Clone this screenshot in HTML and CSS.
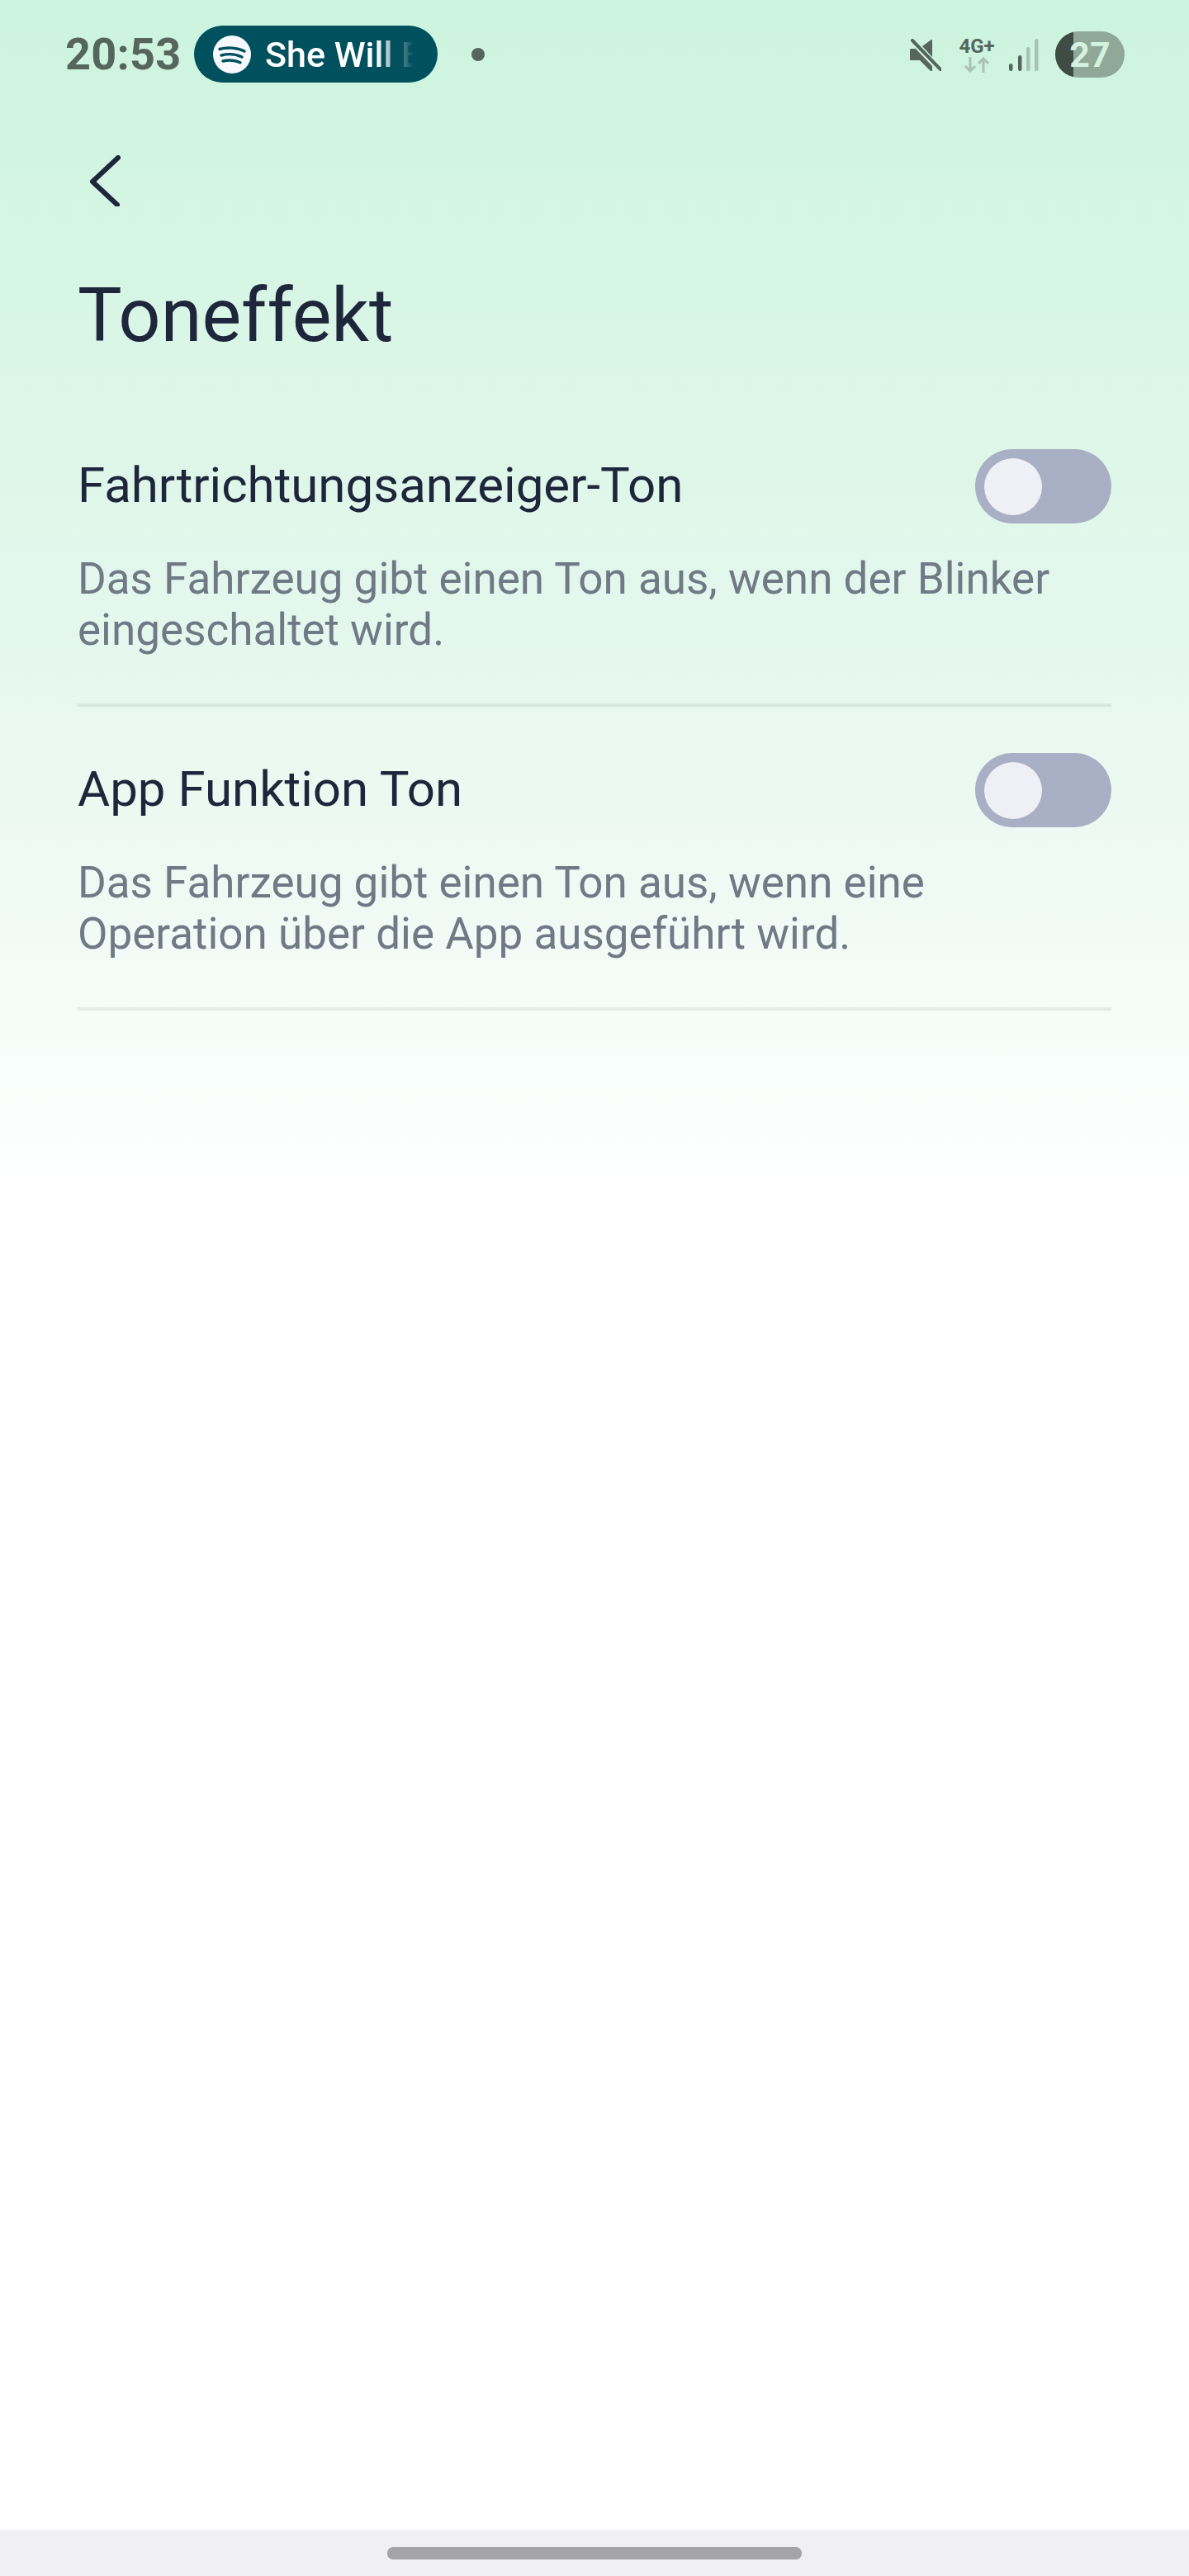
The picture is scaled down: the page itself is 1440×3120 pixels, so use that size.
FILE: index.html
```html
<!DOCTYPE html>
<html lang="de">
<head>
    <meta charset="UTF-8">
    <meta name="viewport" content="width=device-width, initial-scale=1.0">
    <title>Toneffekt</title>
    <link rel="stylesheet" href="styles.css">
</head>
<body>
    <div class="screen">
        <div class="status-bar">
            <span class="clock">20:53</span>
            <div class="media-chip">
                <svg class="spotify" viewBox="0 0 46 46">
                    <circle cx="23" cy="23" r="23" fill="#f8f9ff"/>
                    <path d="M8 16.500c9-2.500 21-2 30 2.500M10 24c8-2 18-1.500 25 2M12 31c7-1.500 15-1 21 1.800" fill="none" stroke="#01505e" stroke-width="3.400" stroke-linecap="round"/>
                </svg>
                <span class="chip-text">She Will B</span>
            </div>
            <span class="notif-dot"></span>
            <div class="status-icons">
                <svg class="mute" viewBox="0 0 40 42">
                    <path d="M3 12h6l20 21v6h-2L14 26H3q-1 0-1-1V13q0-1 1-1zM17 9L28 1q1-1 1 1v20z" fill="#56665c"/>
                    <path d="M5 2l34 35" fill="none" stroke="#56665c" stroke-width="4" stroke-linecap="round"/>
                </svg>
                <div class="net">
                    <span class="net-label">4G+</span>
                    <svg class="net-arrows" viewBox="0 0 32 19">
                        <path d="M8 0v17M2 11l6 6 6-6" fill="none" stroke="#a9c2b2" stroke-width="3"/>
                        <path d="M24 19V2M18 8l6-6 6 6" fill="none" stroke="#a9c2b2" stroke-width="3"/>
                    </svg>
                </div>
                <svg class="signal" viewBox="0 0 36 40">
                    <rect x="0" y="30" width="4.500" height="9" rx="2.200" fill="#56665c"/>
                    <rect x="11" y="20" width="4.500" height="19" rx="2.200" fill="#56665c"/>
                    <rect x="21" y="10" width="4.500" height="29" rx="2.200" fill="#a9c2b2"/>
                    <rect x="31" y="0" width="4.500" height="39" rx="2.200" fill="#a9c2b2"/>
                </svg>
                <div class="battery"><span class="battery-level"></span><span class="battery-num">27</span></div>
            </div>
        </div>

        <div class="top-nav">
            <svg class="back" viewBox="0 0 38 62">
                <path d="M35 3L4 32l30 28" fill="none" stroke="#1e263b" stroke-width="6" stroke-linecap="round" stroke-linejoin="round"/>
            </svg>
        </div>

        <h1>Toneffekt</h1>

        <div class="setting">
            <div class="setting-head">
                <span class="setting-title">Fahrtrichtungsanzeiger-Ton</span>
                <span class="toggle"><span class="knob"></span></span>
            </div>
            <p>Das Fahrzeug gibt einen Ton aus, wenn der Blinker<br>eingeschaltet wird.</p>
        </div>
        <div class="setting">
            <div class="setting-head">
                <span class="setting-title">App Funktion Ton</span>
                <span class="toggle"><span class="knob"></span></span>
            </div>
            <p>Das Fahrzeug gibt einen Ton aus, wenn eine<br>Operation über die App ausgeführt wird.</p>
        </div>
    </div>

    <div class="nav-bar"><span class="home-pill"></span></div>
</body>
</html>
```

FILE: styles.css
```css
* {
    box-sizing: border-box;
}
body {
    margin: 0;
    height: 3120px;
    font-family: Roboto, "Noto Sans", sans-serif;
    background: #fff;
    display: flex;
    flex-direction: column;
}
.screen {
    flex: 1;
    background: linear-gradient(#ccf4de 0, #e6f8ee 800px, #f0faf4 1100px, #f8fefb 1300px, #fff 1440px);
}

/* status bar */
.status-bar {
    height: 130px;
    padding: 31px 78px 0 79px;
    display: flex;
    align-items: flex-start;
}
.clock {
    flex: none;
    width: 156px;
    font-size: 54px;
    font-weight: 700;
    letter-spacing: 0.3px;
    line-height: 69px;
    color: #56665c;
}
.media-chip {
    flex: none;
    width: 295px;
    height: 69px;
    border-radius: 35px;
    background: #01505e;
    padding-left: 23px;
    display: flex;
    align-items: center;
}
.spotify {
    width: 46px;
    height: 46px;
    flex: none;
}
.chip-text {
    margin-left: 17px;
    width: 180px;
    overflow: hidden;
    white-space: nowrap;
    font-size: 43px;
    font-weight: 500;
    color: #fff;
    -webkit-mask-image: linear-gradient(to right, #000 75%, transparent 100%);
    mask-image: linear-gradient(to right, #000 75%, transparent 100%);
}
.notif-dot {
    flex: none;
    width: 16px;
    height: 16px;
    margin: 27px 0 0 41px;
    border-radius: 50%;
    background: #56665c;
}
.status-icons {
    margin-left: auto;
    display: flex;
    align-items: flex-start;
}
.mute {
    width: 40px;
    height: 42px;
    margin-top: 16px;
}
.net {
    width: 44px;
    margin: 13px 0 0 21px;
    display: flex;
    flex-direction: column;
    align-items: center;
}
.net-label {
    font-size: 24px;
    font-weight: 700;
    line-height: 24px;
    color: #56665c;
}
.net-arrows {
    width: 32px;
    height: 19px;
    margin-top: 1px;
}
.signal {
    width: 36px;
    height: 40px;
    margin: 16px 0 0 17px;
}
.battery {
    position: relative;
    width: 84px;
    height: 56px;
    margin: 7px 0 0 20px;
    border-radius: 28px;
    background: #8fa898;
    overflow: hidden;
    text-align: center;
}
.battery-level {
    position: absolute;
    left: 0;
    top: 0;
    bottom: 0;
    width: 22px;
    background: #3f4c43;
}
.battery-num {
    position: relative;
    font-size: 43px;
    font-weight: 700;
    line-height: 56px;
    color: #d4f2e0;
}

/* page header */
.top-nav {
    height: 76px;
    padding: 58px 0 0 108px;
}
.back {
    display: block;
    width: 38px;
    height: 62px;
}
h1 {
    margin: 125px 0 0 94px;
    font-size: 90px;
    font-weight: 400;
    line-height: 104px;
    color: #1e263b;
}

/* settings list */
.setting {
    margin: 0 94px;
    border-bottom: 4px solid rgba(30, 40, 35, 0.08);
    height: 368px;
    padding-top: 56px;
}
h1 + .setting {
    margin-top: 109px;
    height: 312px;
    padding-top: 0;
}
.setting-head {
    height: 90px;
    display: flex;
    justify-content: space-between;
    align-items: center;
}
.setting-title {
    padding-bottom: 4px;
    font-size: 60px;
    color: #1e263b;
}
.toggle {
    width: 165px;
    height: 90px;
    border-radius: 45px;
    background: #a9afc4;
    padding: 11px;
}
.knob {
    display: block;
    width: 70px;
    height: 69px;
    border-radius: 50%;
    background: #eff0f5;
}
.setting p {
    margin: 36px 0 0;
    font-size: 53px;
    line-height: 62px;
    color: #707a86;
}

/* gesture bar */
.nav-bar {
    height: 56px;
    flex: none;
    background: #f0f0f2;
    display: flex;
    justify-content: center;
    padding-top: 21px;
}
.home-pill {
    width: 502px;
    height: 15px;
    border-radius: 7px;
    background: #a5a5a7;
}
```
